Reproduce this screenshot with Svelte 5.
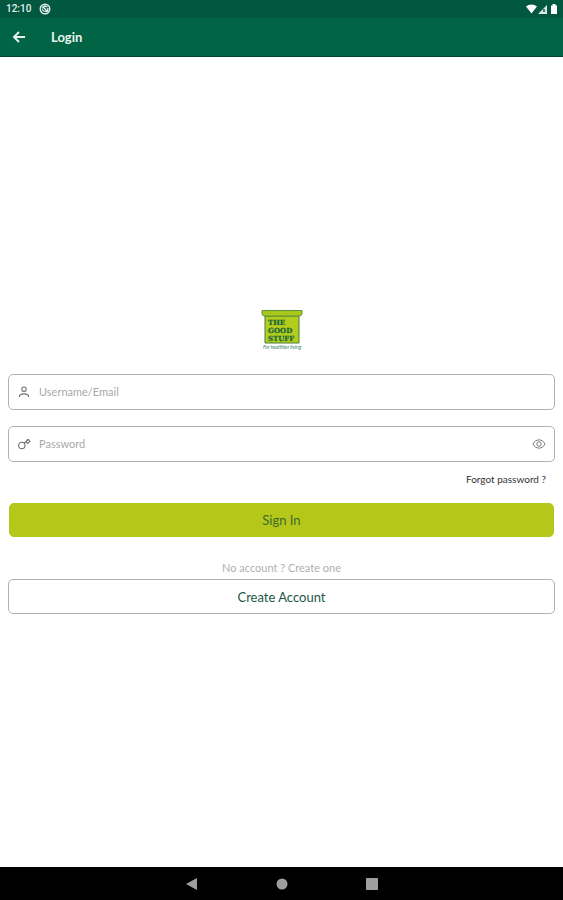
<script>
  let username = "";
  let password = "";
  let visible = false;
</script>

<style>
  :global(body) {
    margin: 0;
    background: #fff;
  }

  .screen {
    display: flex;
    flex-direction: column;
    min-height: 100vh;
    font-family: Lato, "Open Sans", sans-serif;
    color: #1d5748;
  }

  button,
  input {
    font-family: inherit;
    box-sizing: border-box;
  }

  svg {
    display: block;
    flex: none;
  }

  .status {
    display: flex;
    align-items: center;
    height: 18px;
    padding: 0 4px 0 6px;
    background: #01573f;
    color: #e6f1ed;
    font-family: Roboto, sans-serif;
    font-size: 10px;
    font-weight: 500;
    line-height: 18px;
  }

  .status .notice {
    margin-left: 8px;
  }

  .status .signals {
    margin-left: auto;
  }

  .toolbar {
    display: flex;
    align-items: center;
    gap: 24px;
    box-sizing: border-box;
    height: 39px;
    padding: 0 11px;
    background: #016444;
    border-bottom: 1px solid #024a2c;
  }

  .toolbar h1 {
    margin: 0;
    color: #e9f3ee;
    font-size: 13px;
    font-weight: 700;
    line-height: 18px;
  }

  .icon-button {
    padding: 0;
    border: 0;
    background: none;
    cursor: pointer;
  }

  main {
    flex: 1;
    display: flex;
    flex-direction: column;
    justify-content: center;
    padding: 0 8px;
  }

  form {
    display: flex;
    flex-direction: column;
  }

  .logo {
    align-self: center;
    margin-bottom: 22px;
  }

  .field {
    display: flex;
    align-items: center;
    gap: 8px;
    box-sizing: border-box;
    height: 36px;
    padding: 0 8px;
    border: 1px solid #b2b2b2;
    border-radius: 5px;
  }

  .field + .field {
    margin-top: 16px;
  }

  .field input {
    flex: 1;
    min-width: 0;
    padding: 0;
    border: 0;
    outline: none;
    background: none;
    color: #444;
    font-size: 11px;
    line-height: 16px;
  }

  .field input::placeholder {
    color: #a9a9a9;
    opacity: 1;
  }

  .forgot {
    align-self: flex-end;
    margin: 9px 9px 16px;
    color: #333;
    font-size: 10px;
    line-height: 16px;
    text-decoration: none;
  }

  .button {
    height: 35px;
    padding: 0;
    border: 1px solid #b2b2b2;
    border-radius: 5px;
    background: #fff;
    color: #1d5748;
    font-size: 13px;
    line-height: 18px;
    cursor: pointer;
  }

  .primary {
    height: 34px;
    margin: 0 1px;
    border-color: #b5c718;
    background: #b5c718;
    color: #3d6b2c;
  }

  .hint {
    margin: 23px 0 3px;
    color: #b0b0b0;
    font-size: 11px;
    line-height: 16px;
    text-align: center;
  }

  nav {
    display: flex;
    align-items: center;
    justify-content: center;
    gap: 76px;
    height: 33px;
    background: #000;
  }
</style>

<div class="screen">
  <div class="status">
    <span>12:10</span>
    <svg class="notice" width="12" height="12" viewBox="0 0 12 12" fill="none" stroke="#dfebe6">
      <circle cx="6" cy="6" r="4.8" stroke-width="1.4" />
      <path d="M3 5.2 5.5 3l3 .8M8.8 5v3.4H5.3M3.6 3.6l5 5M3.2 6.4l1.6 2" stroke-width="1.4" />
    </svg>
    <svg class="signals" width="34" height="12" viewBox="0 0 34 12">
      <path d="M1 3.6C4 .8 9 .8 12 3.6L6.5 10.5Z" fill="#fff" />
      <path d="M13 11 22 2v9Z" fill="#dce8e2" />
      <path d="M19 6v3" stroke="#01573f" stroke-width="1.5" />
      <path d="M26 2.5h1.500V1h3v1.500H32V11h-6Z" fill="#fff" />
    </svg>
  </div>

  <header class="toolbar">
    <button class="icon-button" aria-label="Back">
      <svg width="16" height="16" viewBox="0 0 16 16" fill="none" stroke="#e9f3ee" stroke-width="2">
        <path d="M14 8H3M8 3 3 8l5 5" />
      </svg>
    </button>
    <h1>Login</h1>
  </header>

  <main>
    <form on:submit|preventDefault>
      <svg class="logo" width="44" height="42" viewBox="0 0 44 42" role="img" aria-label="The Good Stuff">
        <path d="M5 6h34v27H5Z" fill="#b4cc1c" stroke="#477d3c" />
        <path d="M2 .5h40v4L40 6H4L2 4.500Z" fill="#abc71b" stroke="#5d9140" />
        <g fill="#13643d" stroke="#13643d" stroke-width=".2" font-family="DejaVu Serif, serif" font-weight="700" font-size="7">
          <text x="8" y="15">THE</text>
          <text x="8" y="23">GOOD</text>
          <text x="8" y="31">STUFF</text>
        </g>
        <text x="22" y="39" text-anchor="middle" fill="#367f68" font-family="Lato, sans-serif" font-style="italic" font-size="5">For healthier living</text>
      </svg>

      <div class="field">
        <svg width="14" height="14" viewBox="0 0 14 14" fill="none" stroke="#707070" stroke-width="1.1">
          <circle cx="7" cy="4.2" r="2.2" />
          <path d="M2.500 12V11C3.200 8.200 10.800 8.200 11.500 11v1" />
        </svg>
        <input type="text" placeholder="Username/Email" aria-label="Username/Email" bind:value={username} />
      </div>

      <div class="field">
        <svg width="14" height="14" viewBox="0 0 14 14" fill="none" stroke="#707070" stroke-width="1.1">
          <circle cx="4.8" cy="8.500" r="3.2" />
          <path d="M7 6.200 11.500 2.500M9 4.500l1.500 2 2.500-2-1.500-2-2 .5" />
        </svg>
        {#if visible}
          <input type="text" placeholder="Password" aria-label="Password" bind:value={password} />
        {:else}
          <input type="password" placeholder="Password" aria-label="Password" bind:value={password} />
        {/if}
        <button class="icon-button" type="button" aria-label="Show password" on:click={() => (visible = !visible)}>
          <svg width="14" height="14" viewBox="0 0 14 14" fill="none" stroke="#777">
            <path d="M1 7C3.500 1.500 10.500 1.500 13 7 10.500 12.500 3.500 12.500 1 7Z" />
            <circle cx="7" cy="7" r="2.2" />
          </svg>
        </button>
      </div>

      <a class="forgot" href="#forgot">Forgot password ?</a>
      <button class="button primary" type="submit">Sign In</button>
      <p class="hint">No account ? Create one</p>
      <button class="button" type="button">Create Account</button>
    </form>
  </main>

  <nav aria-label="System">
    <button class="icon-button" aria-label="Previous">
      <svg width="14" height="14" viewBox="0 0 14 14"><path d="M1 7 12 1v12Z" fill="#9e9e9e" /></svg>
    </button>
    <button class="icon-button" aria-label="Home">
      <svg width="14" height="14" viewBox="0 0 14 14"><circle cx="7" cy="7" r="5.5" fill="#9e9e9e" /></svg>
    </button>
    <button class="icon-button" aria-label="Recent apps">
      <svg width="14" height="14" viewBox="0 0 14 14"><rect x="1" y="1" width="12" height="12" rx="1" fill="#9e9e9e" /></svg>
    </button>
  </nav>
</div>
